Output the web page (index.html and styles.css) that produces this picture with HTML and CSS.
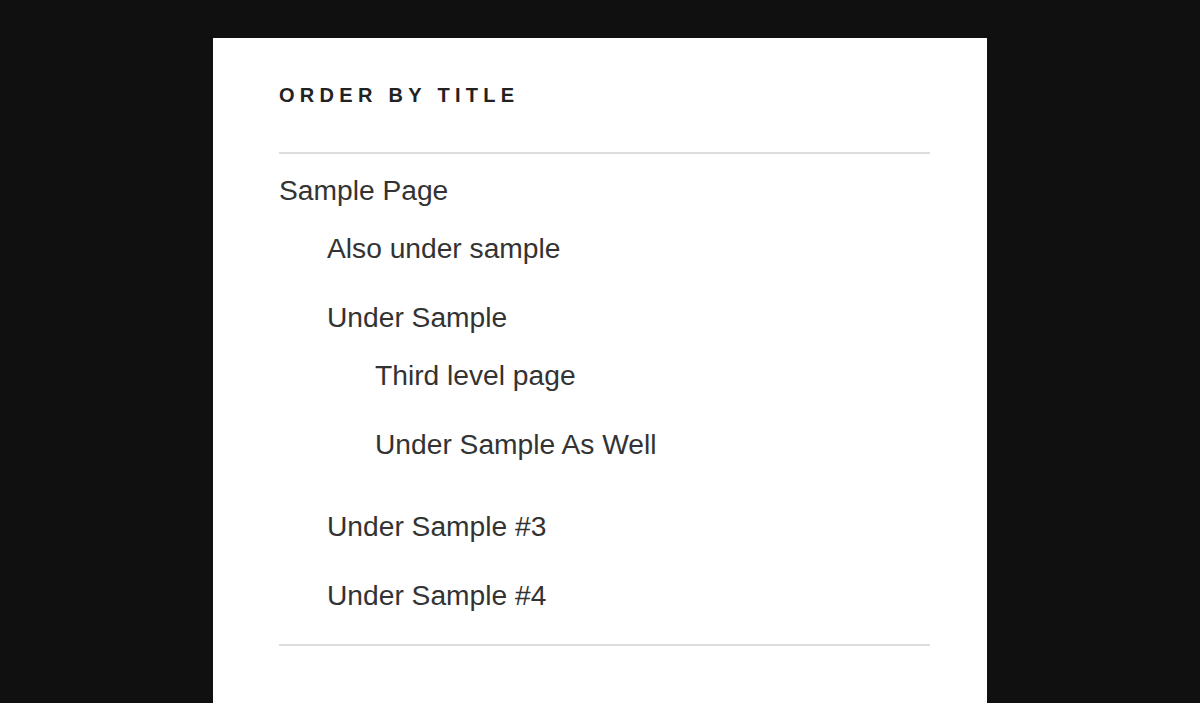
FILE: index.html
```html
<!DOCTYPE html>
<html lang="en">
<head>
    <meta charset="UTF-8">
    <meta name="viewport" content="width=device-width, initial-scale=1.0">
    <title>Pages</title>
    <link rel="stylesheet" href="styles.css">
</head>
<body>
    <div class="panel">
        <section class="widget">
            <h2 class="widget-title">Order by title</h2>
            <ul class="page-list">
                <li>Sample Page
                    <ul class="children">
                        <li>Also under sample</li>
                        <li>Under Sample
                            <ul class="children">
                                <li>Third level page</li>
                                <li>Under Sample As Well</li>
                            </ul>
                        </li>
                        <li>Under Sample #3</li>
                        <li>Under Sample #4</li>
                    </ul>
                </li>
            </ul>
        </section>
    </div>
</body>
</html>
```

FILE: styles.css
```css
*{
    margin: 0;
    padding: 0;
    box-sizing: border-box;
}
body{
    background-color: #101010;
    font-family: "Liberation Sans", Arial, sans-serif;
    color: #333;
}
.panel{
    width: 774px;
    min-height: calc(100vh - 38px);
    margin: 38px auto 0;
    padding: 0 57px 0 66px;
    background-color: #fff;
}
.widget-title{
    padding-top: 43px;
    margin-bottom: 43px;
    font-size: 20px;
    line-height: 28px;
    font-weight: 800;
    letter-spacing: 5.3px;
    text-transform: uppercase;
    color: #222;
}
ul{
    list-style: none;
}
.page-list{
    border-top: 2px solid #ddd;
    border-bottom: 2px solid #ddd;
    padding: 2px 0 2px;
}
.page-list li{
    font-size: 28.2px;
    line-height: 45px;
    padding: 13px 0 11px;
}
.children{
    padding-left: 48px;
    margin-bottom: 2px;
}
.page-list > li{
    padding-top: 12px;
}
```
